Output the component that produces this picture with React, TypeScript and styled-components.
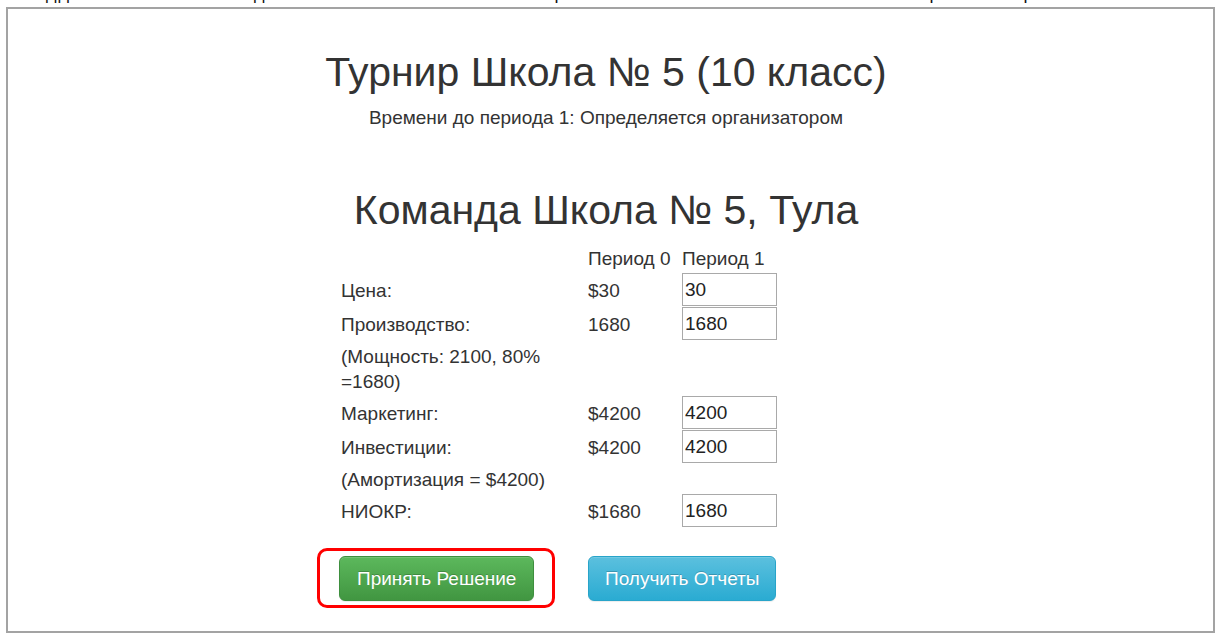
import styled, { createGlobalStyle } from 'styled-components'

const GlobalStyle = createGlobalStyle`
  html, body {
    margin: 0;
    padding: 0;
    background: #fff;
  }
  body {
    font-family: "Liberation Sans", Arial, sans-serif;
    color: #333;
  }
`

const cutMarks = [
  { left: 46, ch: 'д' },
  { left: 2, ch: 'д' },
  { left: 185, ch: 'д' },
  { left: 290, ch: 'р' },
  { left: 365, ch: 'р' },
  { left: 84, ch: 'р' },
]

const rows = [
  { label: 'Цена:', prev: '$30', value: '30' },
  { label: 'Производство:', prev: '1680', value: '1680' },
  { label: '(Мощность: 2100, 80% =1680)' },
  { label: 'Маркетинг:', prev: '$4200', value: '4200' },
  { label: 'Инвестиции:', prev: '$4200', value: '4200' },
  { label: '(Амортизация = $4200)' },
  { label: 'НИОКР:', prev: '$1680', value: '1680' },
]

const Game = () => {
  return (
    <Page>
      <GlobalStyle />
      <CutLine>
        <CutText>
          {cutMarks.map((m, i) => (
            <CutChar key={i} $left={m.left}>{m.ch}</CutChar>
          ))}
        </CutText>
      </CutLine>

      <Frame>
        <Titulo>Турнир Школа № 5 (10 класс)</Titulo>
        <Subtitulo>Времени до периода 1: Определяется организатором</Subtitulo>

        <Equipo>Команда Школа № 5, Тула</Equipo>

        <Tabla>
          <Encabezado />
          <Encabezado>Период 0</Encabezado>
          <Encabezado>Период 1</Encabezado>

          {rows.map((r, i) =>
            r.value ? (
              <Fila key={i}>
                <Celda>{r.label}</Celda>
                <Celda>{r.prev}</Celda>
                <Celda>
                  <Entrada defaultValue={r.value} />
                </Celda>
              </Fila>
            ) : (
              <Fila key={i}>
                <Nota>{r.label}</Nota>
                <div />
                <div />
              </Fila>
            )
          )}

          <Botones>
            <Marcado>
              <Boton $color="green">Принять Решение</Boton>
            </Marcado>
            <Boton $color="blue">Получить Отчеты</Boton>
          </Botones>
        </Tabla>
      </Frame>
    </Page>
  )
}

const Page = styled.div`
  width: 1220px;
  height: 637px;
  overflow: hidden;
`

const CutLine = styled.div`
  height: 7px;
  overflow: hidden;
`

const CutText = styled.div`
  display: flex;
  margin-top: -17px;
  font-size: 18px;
  line-height: 20px;
  color: #111;
`

const CutChar = styled.span<{ $left: number }>`
  margin-left: ${(p) => p.$left}px;
`

const Frame = styled.div`
  margin-left: 6px;
  width: 1209px;
  height: 626px;
  border: 2px solid #a3a3a3;
  padding-right: 9px;
  box-sizing: border-box;
  display: flex;
  flex-direction: column;
  align-items: center;
`

const Titulo = styled.h1`
  margin: 40px 0 0;
  font-size: 41px;
  font-weight: 400;
  line-height: 46px;
  color: #333;
`

const Subtitulo = styled.div`
  margin-top: 11px;
  font-size: 19px;
  line-height: 24px;
  color: #333;
`

const Equipo = styled.h1`
  margin: 57px 0 0;
  font-size: 41px;
  font-weight: 400;
  line-height: 46px;
  color: #333;
`

const Tabla = styled.div`
  display: grid;
  grid-template-columns: 247px 94px 95px;
  width: 532px;
  margin: 11px 0 0 2px;
  font-size: 19px;
  line-height: 25px;
  color: #333;
`

const Fila = styled.div`
  display: contents;
`

const Celda = styled.div`
  display: flex;
  align-items: center;
  height: 34px;
`

const Encabezado = styled.div`
  display: flex;
  align-items: center;
  height: 29px;
`

const Nota = styled.div`
  padding: 3px 0 2px;
`

const Entrada = styled.input`
  box-sizing: border-box;
  width: 95px;
  height: 33px;
  margin: 0 0 1px;
  padding: 0 2px;
  border: 1px solid #a9a9a9;
  font-family: "Liberation Sans", Arial, sans-serif;
  font-size: 19px;
  color: #222;
  outline: none;
`

const Botones = styled.div`
  grid-column: 1 / 4;
  display: grid;
  grid-template-columns: 247px 189px;
  margin-top: 28px;
`

const Marcado = styled.div`
  position: relative;
  justify-self: start;
  margin-left: -2px;

  &::after {
    content: '';
    position: absolute;
    top: -8px;
    bottom: -7px;
    left: -22px;
    right: -21px;
    border: 3px solid #f00;
    border-radius: 10px;
  }
`

const Boton = styled.button<{ $color: 'green' | 'blue' }>`
  display: block;
  font-family: "Liberation Sans", Arial, sans-serif;
  font-size: 19px;
  line-height: 23px;
  padding: 10px ${(p) => (p.$color === 'green' ? '17px' : '16px')};
  border-radius: 6px;
  color: #fff;
  cursor: pointer;
  text-shadow: 0 -1px 0 rgba(0, 0, 0, 0.2);
  box-shadow: inset 0 1px 0 rgba(255, 255, 255, 0.15), 0 1px 1px rgba(0, 0, 0, 0.075);
  border: 1px solid ${(p) => (p.$color === 'green' ? '#3e8f3e' : '#28a4c9')};
  background-image: ${(p) =>
    p.$color === 'green'
      ? 'linear-gradient(to bottom, #5cb85c 0, #419641 100%)'
      : 'linear-gradient(to bottom, #5bc0de 0, #2aabd2 100%)'};
  justify-self: start;
`

export default Game
